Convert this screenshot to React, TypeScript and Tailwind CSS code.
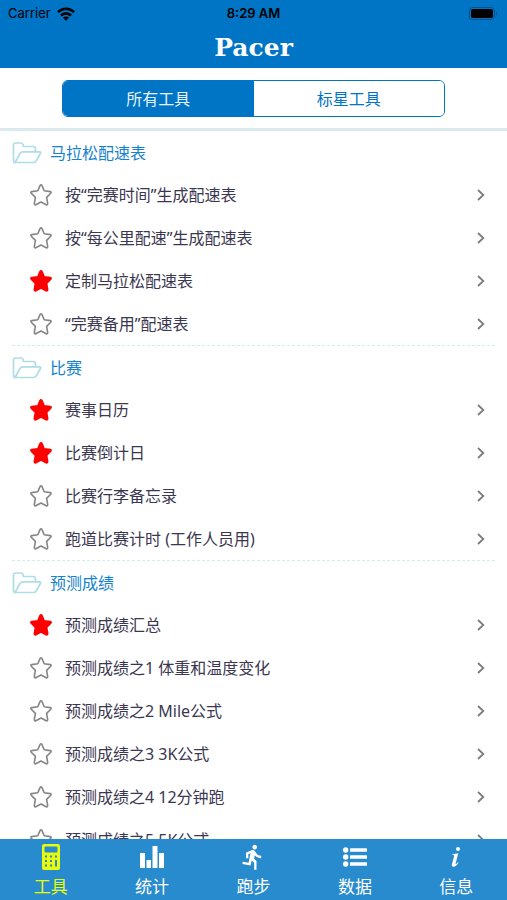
import { useState } from "react";
import { MdDirectionsRun } from "react-icons/md";

type Tool = {
  id: string;
  name: string;
};

type Section = {
  title: string;
  tools: Tool[];
};

const sections: Section[] = [
  {
    title: "马拉松配速表",
    tools: [
      { id: "time-pace", name: "按“完赛时间”生成配速表" },
      { id: "km-pace", name: "按“每公里配速”生成配速表" },
      { id: "custom-pace", name: "定制马拉松配速表" },
      { id: "backup-pace", name: "“完赛备用”配速表" },
    ],
  },
  {
    title: "比赛",
    tools: [
      { id: "calendar", name: "赛事日历" },
      { id: "countdown", name: "比赛倒计日" },
      { id: "luggage", name: "比赛行李备忘录" },
      { id: "track-timer", name: "跑道比赛计时 (工作人员用)" },
    ],
  },
  {
    title: "预测成绩",
    tools: [
      { id: "summary", name: "预测成绩汇总" },
      { id: "predict-1", name: "预测成绩之1 体重和温度变化" },
      { id: "predict-2", name: "预测成绩之2 Mile公式" },
      { id: "predict-3", name: "预测成绩之3 3K公式" },
      { id: "predict-4", name: "预测成绩之4 12分钟跑" },
      { id: "predict-5", name: "预测成绩之5 5K公式" },
    ],
  },
];

function WifiIcon() {
  return (
    <svg viewBox="0 0 18 14" className="h-3.5 w-[18px]" fill="none" stroke="currentColor" strokeWidth="2.6">
      <path d="M1 5.2C5.5.6 12.500.6 17 5.200" />
      <path d="M4 8.500C6.800 5.600 11.200 5.600 14 8.500" />
      <path d="M9 13.800L5.900 10.600C7.500 9 10.500 9 12.100 10.600Z" fill="currentColor" stroke="none" />
    </svg>
  );
}

function BatteryIcon() {
  return (
    <svg viewBox="0 0 30 14" className="h-3.5 w-[30px]">
      <rect x="0.500" y="0.500" width="25" height="12" rx="3.500" fill="none" stroke="#05528a" />
      <rect x="2" y="2" width="22" height="9" rx="2" fill="#000" />
      <path d="M27 4.500v4c1.600-.6 1.600-3.400 0-4z" fill="#05528a" />
    </svg>
  );
}

function FolderIcon() {
  return (
    <svg viewBox="0 0 30 24" className="h-6 w-[30px]" fill="none" stroke="#aedde6" strokeWidth="1.700" strokeLinejoin="round" strokeLinecap="round">
      <path d="M3 21.500Q1.500 21.500 1.500 19.500V4Q1.500 2 3.500 2H9Q10.500 2 11 3.500L11.500 5.500H21Q23.500 5.500 23.500 8V10.500" />
      <path d="M3 21.500L8 12.500Q9 10.800 11 10.800H27.500Q29.300 10.800 28.400 12.500L24.500 19.500Q23.300 21.500 21.500 21.500Z" />
    </svg>
  );
}

function StarIcon({ filled }: { filled: boolean }) {
  return (
    <svg
      viewBox="0 0 24 24"
      className="size-6"
      fill={filled ? "#ff0000" : "none"}
      stroke={filled ? "#ff0000" : "#858585"}
      strokeWidth="1.600"
      strokeLinejoin="round"
    >
      <path d="M11 2.600Q12 .9 13 2.600L15.200 7.800L21.300 8.600Q22.800 9 21.700 10.300L17.600 14.400L18.700 20.600Q18.700 22.300 17.200 21.700L12 19L6.800 21.700Q5.300 22.300 5.300 20.600L6.400 14.400L2.300 10.300Q1.200 9 2.700 8.600L8.800 7.800Z" />
    </svg>
  );
}

function ChevronIcon() {
  return (
    <svg viewBox="0 0 8 12" className="h-3 w-2" fill="none" stroke="#7c7c7c" strokeWidth="1.800">
      <path d="M1 1L6.300 6L1 11" />
    </svg>
  );
}

function CalculatorIcon() {
  return (
    <svg viewBox="0 0 20 26" className="h-[26px] w-5">
      <path
        fillRule="evenodd"
        fill="currentColor"
        d="M3 0H17Q19 0 19 2V24Q19 26 17 26H3Q1 26 1 24V2Q1 0 3 0ZM4.500 2.500Q3.500 2.500 3.500 3.500V7.500Q3.500 8.500 4.500 8.500H15.500Q16.500 8.500 16.500 7.500V3.500Q16.500 2.500 15.500 2.500ZM4 11.500V13.500H6V11.500ZM9 11.500V13.500H11V11.500ZM14 11.500V13.500H16V11.500ZM4 16V18H6V16ZM9 16V18H11V16ZM14 16V22.500H16V16ZM4 20.500V22.500H6V20.500ZM9 20.500V22.500H11V20.500Z"
      />
    </svg>
  );
}

function StatsIcon() {
  return (
    <svg viewBox="0 0 26 22" className="h-[22px] w-[26px]" fill="currentColor">
      <path d="M1 7H6V22H1ZM7.500 14H12V22H7.500ZM13.500 0H18.500V22H13.500ZM20 7H25V22H20Z" />
    </svg>
  );
}

function ListIcon() {
  return (
    <svg viewBox="0 0 24 20" className="h-5 w-6" fill="currentColor">
      <circle cx="2.700" cy="3" r="2.700" />
      <circle cx="2.700" cy="10" r="2.700" />
      <circle cx="2.700" cy="17" r="2.700" />
      <rect x="7" y="1.200" width="17" height="3.600" rx="0.500" />
      <rect x="7" y="8.200" width="17" height="3.600" rx="0.500" />
      <rect x="7" y="15.200" width="17" height="3.600" rx="0.500" />
    </svg>
  );
}

function InfoIcon() {
  return (
    <svg viewBox="0 0 10 22" className="h-[22px] w-2.5" fill="currentColor">
      <circle cx="7" cy="3" r="2" />
      <path d="M1.500 8.200L7.300 7.300L4.600 17.500C4.300 18.800 5.300 18.200 6.800 16.200L7.500 16.700C5.800 19.500 4.200 20.700 2.500 20.700C1 20.700.6 19.500 1 18L3.100 10.200C3.300 9.300 2.900 9.100 1.300 9Z" />
    </svg>
  );
}

const tabs = [
  { label: "工具", icon: <CalculatorIcon /> },
  { label: "统计", icon: <StatsIcon /> },
  { label: "跑步", icon: <MdDirectionsRun size={28} /> },
  { label: "数据", icon: <ListIcon /> },
  { label: "信息", icon: <InfoIcon /> },
];

export default function App() {
  const [starred, setStarred] = useState<string[]>(["custom-pace", "calendar", "countdown", "summary"]);
  const [onlyStarred, setOnlyStarred] = useState(false);
  const [activeTab, setActiveTab] = useState("工具");

  const toggleStar = (id: string) => {
    setStarred((prev) => (prev.includes(id) ? prev.filter((item) => item !== id) : [...prev, id]));
  };

  const shownSections = sections
    .map((section) => ({
      ...section,
      tools: section.tools.filter((tool) => !onlyStarred || starred.includes(tool.id)),
    }))
    .filter((section) => section.tools.length > 0);

  return (
    <div className="flex h-screen flex-col bg-white font-['Noto_Sans','Noto_Sans_CJK_SC',sans-serif]">
      <header className="shrink-0 bg-[#0074c5]">
        <div className="grid h-7 grid-cols-3 items-center px-2 font-['Inter',sans-serif] text-[13px] text-black">
          <div className="flex items-center gap-1.5">
            <span>Carrier</span>
            <WifiIcon />
          </div>
          <span className="text-center font-semibold">8:29 AM</span>
          <div className="flex justify-end">
            <BatteryIcon />
          </div>
        </div>
        <h1 className="h-10 text-center font-['DejaVu_Serif',serif] text-[25px] leading-10 font-bold text-white">Pacer</h1>
      </header>

      <div className="shrink-0 border-b-3 border-[#dbe8ee] px-[62px] pt-3 pb-[11px]">
        <div className="flex h-[37px] overflow-hidden rounded-md border border-[#0074c5] text-base">
          <button
            className={onlyStarred ? "flex-1 bg-white text-[#0074c5]" : "flex-1 bg-[#0074c5] text-[#e6f3fb]"}
            onClick={() => setOnlyStarred(false)}
          >
            所有工具
          </button>
          <button
            className={onlyStarred ? "flex-1 bg-[#0074c5] text-[#e6f3fb]" : "flex-1 bg-white text-[#0074c5]"}
            onClick={() => setOnlyStarred(true)}
          >
            标星工具
          </button>
        </div>
      </div>

      <main className="min-h-0 flex-1 overflow-hidden px-3">
        {shownSections.map((section) => (
          <section key={section.title} className="border-b border-dashed border-[#d5ebec] pt-0.5">
            <h2 className="flex h-10 items-center gap-2 text-base text-[#1582cd]">
              <FolderIcon />
              {section.title}
            </h2>
            <ul>
              {section.tools.map((tool) => (
                <li key={tool.id} className="flex h-[43px] items-center gap-3 pl-[17px]">
                  <button aria-label="标星" onClick={() => toggleStar(tool.id)}>
                    <StarIcon filled={starred.includes(tool.id)} />
                  </button>
                  <a href={`#${tool.id}`} className="flex flex-1 items-center justify-between pr-2.5 text-base text-[#3b3750]">
                    {tool.name}
                    <ChevronIcon />
                  </a>
                </li>
              ))}
            </ul>
          </section>
        ))}
      </main>

      <nav className="grid h-[61px] shrink-0 grid-cols-5 bg-[#288bcd]">
        {tabs.map((tab) => (
          <button
            key={tab.label}
            className={
              activeTab === tab.label
                ? "flex flex-col items-center text-[#e8fb0c]"
                : "flex flex-col items-center text-white"
            }
            onClick={() => setActiveTab(tab.label)}
          >
            <span className="flex h-9 items-center">{tab.icon}</span>
            <span className="text-[17px] leading-6">{tab.label}</span>
          </button>
        ))}
      </nav>
    </div>
  );
}
